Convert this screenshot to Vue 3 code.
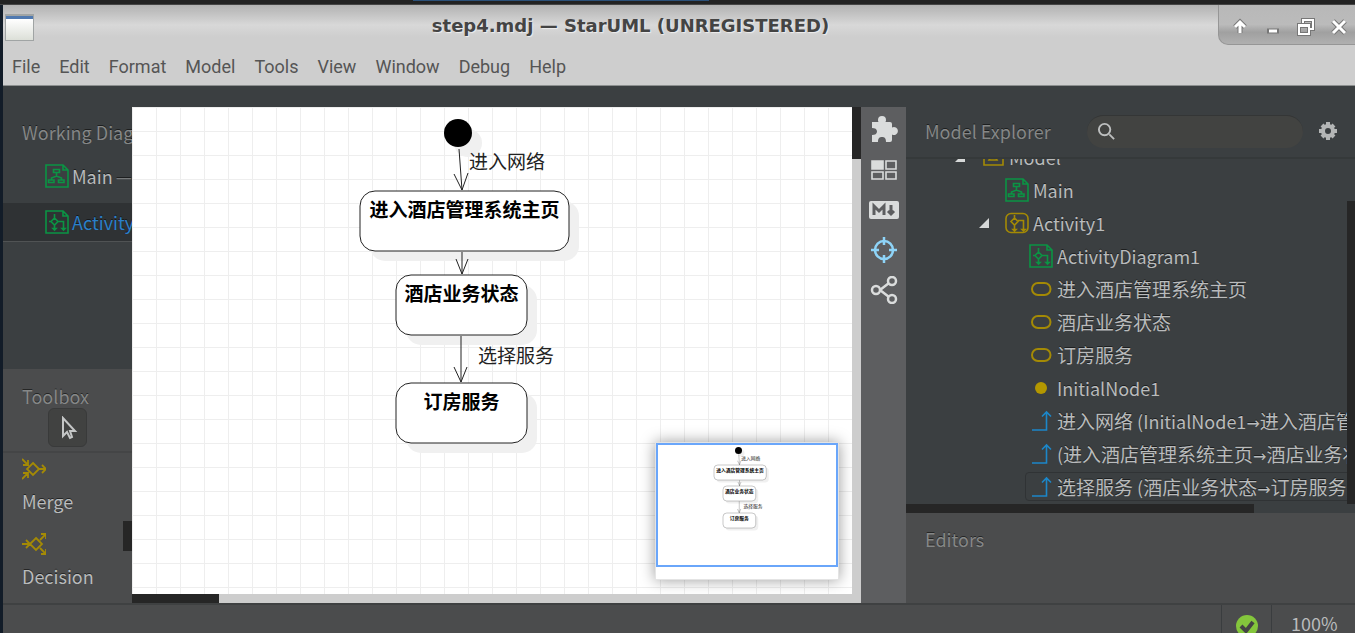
<script setup>
import { ref } from "vue";

const MENUS = [
  "File",
  "Edit",
  "Format",
  "Model",
  "Tools",
  "View",
  "Window",
  "Debug",
  "Help",
];

const WORKING_DIAGRAMS = [
  { name: "Main", suffix: "—", icon: "class-diagram" },
  { name: "ActivityDiagram1", icon: "activity-diagram" },
];

const TOOLS = [
  { name: "Merge", icon: "merge" },
  { name: "Decision", icon: "decision" },
];

const TREE = [
  { name: "Model", level: 0, icon: "model", open: true },
  { name: "Main", level: 1, icon: "class-diagram" },
  { name: "Activity1", level: 1, icon: "activity", open: true },
  { name: "ActivityDiagram1", level: 2, icon: "activity-diagram" },
  { name: "进入酒店管理系统主页", level: 2, icon: "action" },
  { name: "酒店业务状态", level: 2, icon: "action" },
  { name: "订房服务", level: 2, icon: "action" },
  { name: "InitialNode1", level: 2, icon: "initial" },
  {
    name: "进入网络 (InitialNode1→进入酒店管理系统主页)",
    level: 2,
    icon: "flow",
  },
  { name: "(进入酒店管理系统主页→酒店业务状态)", level: 2, icon: "flow" },
  { name: "选择服务 (酒店业务状态→订房服务)", level: 2, icon: "flow" },
];

const ACTIONS = [
  { name: "进入酒店管理系统主页", x: 228, y: 84, width: 209 },
  { name: "酒店业务状态", x: 264, y: 168, width: 131 },
  { name: "订房服务", x: 264, y: 276, width: 131 },
];

const FLOWS = [
  { line: "M327 42L330 83", head: "M322 67L330 83L336 66" },
  { line: "M330 145V167", head: "M324 152L330 167L336 152" },
  { line: "M329 229V275", head: "M322 260L329 275L335 260" },
];

const currentDiagram = ref("ActivityDiagram1");
const selected = ref(TREE.length - 1);
const search = ref("");

// Chinese runs and arrows have their own size next to the latin text
function splitRuns(name) {
  return name.match(/→|[\u4e00-\u9fff]+|[^→\u4e00-\u9fff]+/g).map((text) => {
    if (text === "→") return { text, type: "arrow" };
    return { text, type: /[\u4e00-\u9fff]/.test(text) ? "han" : "latin" };
  });
}
</script>

<template>
  <div class="desktop">
    <!-- Icons shared by the lists -->
    <svg class="sprite" aria-hidden="true">
      <symbol id="class-diagram" viewBox="0 0 24 24">
        <path d="M1 1H18L23 6V23H1Z M18 1V6H23" stroke-width="1.6" />
        <path
          d="M8.500 5.500h6v3h-6Z M11.500 8.500v3.500 M6.500 16V14L11.500 12L16.500 14V16 M3.500 16h5.500v2.500h-5.500Z M13.500 16h5.500v2.500h-5.500Z"
          stroke-width="1.6"
        />
      </symbol>
      <symbol id="activity-diagram" viewBox="0 0 24 24">
        <path d="M1 1H18L23 6V23H1Z M18 1V6H23" stroke-width="1.6" />
        <path
          d="M9.500 4V8L13 11.500L9.500 15L6 11.500L9.500 8 M6 11.500H4 M9.500 15V20 M13 11.500H18.500V20 M8 18.500L9.500 20L11 18.500Z M17 18.500L18.500 20L20 18.500Z"
          stroke-width="1.6"
        />
      </symbol>
      <symbol id="activity" viewBox="0 0 24 24">
        <rect
          x="1"
          y="2.500"
          width="22"
          height="19"
          rx="5"
          stroke-width="1.6"
        />
        <path
          d="M9.500 4V7L13 10.500L9.500 14L6 10.500L9.500 7 M9.500 14V20 M13 9.500H18.500V20 M8 18.500L9.500 20L11 18.500Z M17 18.500L18.500 20L20 18.500Z"
          stroke-width="1.6"
        />
      </symbol>
      <symbol id="model" viewBox="0 0 24 24">
        <path
          d="M3 6H22V20H3Z M3 6V3H11V6 M12 8L8 15H16Z"
          stroke-width="1.6"
        />
      </symbol>
      <symbol id="action" viewBox="0 0 24 24">
        <rect x="3" y="6" width="18.500" height="12" rx="6" />
      </symbol>
      <symbol id="initial" viewBox="0 0 24 24">
        <circle cx="12" cy="12" r="6" fill="currentColor" stroke="none" />
      </symbol>
      <symbol id="flow" viewBox="0 0 24 24">
        <path
          d="M3 21H17.500V3 M13 7.500L17.500 3L22 7.500"
          stroke-width="1.6"
        />
      </symbol>
      <symbol id="merge" viewBox="0 0 24 24">
        <path
          d="M11 6L17 12L11 18L5 12Z M17 12H24 M20 8L24 12L20 16 M0 2L6 8 M6 3V8H1 M0 22L6 16 M6 21V16H1"
          stroke-width="1.8"
        />
      </symbol>
      <symbol id="decision" viewBox="0 0 24 24">
        <path
          d="M14 6L20 12L14 18L8 12Z M0 12H8 M4 8L8 12L4 16 M18 8L24 2 M19 2H24V7 M18 16L24 22 M19 22H24V17"
          stroke-width="1.8"
        />
      </symbol>
    </svg>

    <div class="taskbar"><span class="taskbar-active" /></div>

    <div class="window">
      <header class="titlebar">
        <span class="app-icon" />
        <h1 class="title">step4.mdj — StarUML (UNREGISTERED)</h1>
        <div class="window-controls">
          <button aria-label="Shade">
            <svg viewBox="0 0 20 20">
              <path class="outline" d="M10 16V6M5 10L10 5L15 10" />
              <path d="M10 16V6M5 10L10 5L15 10" />
            </svg>
          </button>
          <button aria-label="Minimize">
            <svg viewBox="0 0 20 20">
              <path class="outline" d="M4 14H16" />
              <path d="M6 14H14" />
            </svg>
          </button>
          <button aria-label="Restore">
            <svg class="thin" viewBox="0 0 20 20">
              <path
                class="outline"
                d="M7 6V3H17V12H14M3 8H13V17H3ZM3 9H13"
              />
              <path d="M7 6V3H17V12H14M3 8H13V17H3ZM3 9H13" />
            </svg>
          </button>
          <button aria-label="Close">
            <svg viewBox="0 0 20 20">
              <path class="outline" d="M4 4L16 16M16 4L4 16" />
              <path d="M4 4L16 16M16 4L4 16" />
            </svg>
          </button>
        </div>
      </header>

      <nav class="menubar">
        <button v-for="menu in MENUS" :key="menu">{{ menu }}</button>
      </nav>

      <main class="workspace">
        <aside class="sidebar">
          <section class="working">
            <h2 class="panel-title">Working Diagrams</h2>
            <ul class="diagrams">
              <li v-for="diagram in WORKING_DIAGRAMS" :key="diagram.name">
                <button
                  :class="[
                    'diagram',
                    { 'diagram-current': diagram.name === currentDiagram },
                  ]"
                  @click="currentDiagram = diagram.name"
                >
                  <svg class="icon icon-green">
                    <use :href="`#${diagram.icon}`" />
                  </svg>
                  <span>{{ diagram.name }}</span>
                  <span v-if="diagram.suffix" class="suffix">{{
                    diagram.suffix
                  }}</span>
                </button>
              </li>
            </ul>
          </section>

          <section class="toolbox">
            <div class="toolbox-header">
              <h2 class="panel-title">Toolbox</h2>
              <button class="pointer" aria-label="Select">
                <svg viewBox="0 0 24 24">
                  <path d="M7 2V20L11 16L14 22L16 21L14 15H19Z" />
                </svg>
              </button>
            </div>
            <div class="toolbox-body">
              <button v-for="tool in TOOLS" :key="tool.name" class="tool">
                <svg class="icon icon-yellow">
                  <use :href="`#${tool.icon}`" />
                </svg>
                {{ tool.name }}
              </button>
              <span class="toolbox-thumb" />
            </div>
          </section>
        </aside>

        <section class="editor">
          <div class="canvas">
            <svg class="diagram-area">
              <g id="diagram">
                <g class="shadow">
                  <circle cx="336" cy="36" r="14" />
                  <rect
                    v-for="action in ACTIONS"
                    :key="action.name"
                    :x="action.x + 10"
                    :y="action.y + 10"
                    :width="action.width"
                    height="60"
                    rx="15"
                  />
                </g>
                <circle cx="326" cy="26" r="14" />
                <g v-for="action in ACTIONS" :key="action.name">
                  <rect
                    class="action"
                    :x="action.x"
                    :y="action.y"
                    :width="action.width"
                    height="60"
                    rx="15"
                  />
                  <text
                    class="action-name"
                    :x="action.x + action.width / 2"
                    :y="action.y + 26"
                  >
                    {{ action.name }}
                  </text>
                </g>
                <path
                  v-for="flow in FLOWS"
                  :key="flow.line"
                  class="flow"
                  :d="flow.line + flow.head"
                />
                <text class="flow-name" x="337" y="62">进入网络</text>
                <text class="flow-name" x="346" y="256">选择服务</text>
              </g>
            </svg>
            <div class="minimap">
              <svg viewBox="0 0 720 488"><use href="#diagram" /></svg>
            </div>
          </div>
          <div class="scroll-y"><span /></div>
          <div class="scroll-x"><span /></div>
        </section>

        <div class="toolbar">
          <button aria-label="Extensions">
            <svg viewBox="0 0 28 28">
              <path
                fill="currentColor"
                d="M2 6H8.500C8 5 8 4.500 8 4A4 4 0 0 1 16 4C16 4.500 16 5 15.500 6H20Q22 6 22 8V11.500A4 4 0 1 1 22 18.500V24Q22 26 20 26H16C16 22 14.500 21 12 21C9.500 21 8 22 8 26H2V19C5 19 7 18 7 15.500C7 13 5 12 2 12Z"
              />
            </svg>
          </button>
          <button aria-label="Views">
            <svg viewBox="0 0 28 28">
              <rect x="2" y="5" width="11" height="8" fill="currentColor" />
              <path
                class="stroked"
                d="M2 5H13V13H2Z M16 5H26V13H16Z M2 16H13V23H2Z M16 16H26V23H16Z"
              />
            </svg>
          </button>
          <button aria-label="Markdown">
            <svg viewBox="0 0 30 28">
              <rect
                x="0"
                y="5"
                width="30"
                height="18"
                rx="2"
                fill="currentColor"
              />
              <path class="mark" d="M5 19V10L10 15L15 10V19" />
              <path class="mark" d="M22 9V16M19 15L22 18L25 15" />
            </svg>
          </button>
          <button class="active" aria-label="Navigator">
            <svg viewBox="0 0 28 28">
              <g class="stroked thick">
                <circle cx="14" cy="14" r="9" />
                <path d="M14 1V9M14 19V27M1 14H9M19 14H27" />
              </g>
            </svg>
          </button>
          <button aria-label="Share">
            <svg viewBox="0 0 28 28">
              <g class="stroked thick">
                <circle cx="6" cy="14" r="4" />
                <circle cx="22" cy="5" r="4" />
                <circle cx="22" cy="23" r="4" />
                <path d="M10 14L19 7M10 14L19 21" />
              </g>
            </svg>
          </button>
        </div>

        <aside class="explorer">
          <header class="explorer-header">
            <h2 class="panel-title">Model Explorer</h2>
            <label class="search">
              <svg viewBox="0 0 20 20">
                <circle cx="8" cy="8" r="6" />
                <path d="M13 13L18 18" />
              </svg>
              <input v-model="search" type="text" aria-label="Search" />
            </label>
            <button class="settings" aria-label="Settings">
              <svg viewBox="0 0 20 20">
                <circle cx="10" cy="10" r="5" />
                <path
                  d="M10 1V4M10 16V19M1 10H4M16 10H19M4 4L6 6M14 14L16 16M16 4L14 6M6 14L4 16"
                />
              </svg>
            </button>
          </header>

          <div class="tree">
            <ul class="nodes">
              <li
                v-for="(node, index) in TREE"
                :key="index"
                :class="['node', `level-${node.level}`]"
              >
                <span class="toggle">
                  <svg v-if="node.open" viewBox="0 0 10 10">
                    <path d="M10 0V10H0Z" />
                  </svg>
                </span>
                <button
                  :class="['node-name', { selected: index === selected }]"
                  @click="selected = index"
                >
                  <svg :class="['icon', `icon-${node.icon}`]">
                    <use :href="`#${node.icon}`" />
                  </svg>
                  <span class="label"
                    ><span
                      v-for="(run, i) in splitRuns(node.name)"
                      :key="i"
                      :class="run.type"
                      >{{ run.text }}</span
                    ></span
                  >
                </button>
              </li>
            </ul>
            <span class="tree-thumb" />
          </div>
          <div class="tree-scroll"><span /></div>

          <section class="editors">
            <h2 class="panel-title">Editors</h2>
          </section>
        </aside>
      </main>

      <footer class="statusbar">
        <div class="status">
          <svg viewBox="0 0 22 22">
            <circle cx="11" cy="11" r="11" fill="#84c63c" />
            <path d="M5 11L10 16L17 7" />
          </svg>
        </div>
        <div class="zoom">100%</div>
      </footer>
    </div>
  </div>
</template>

<style>
body {
  margin: 0;
  background: #121c28;
}
</style>

<style scoped>
* {
  box-sizing: border-box;
}

.desktop {
  display: flex;
  flex-direction: column;
  height: 100vh;
  overflow: hidden;
  background: #121c28;
  color: #b9bbbc;
  font-family: "Noto Sans CJK SC", sans-serif;
  font-size: 18px;
  line-height: 24px;
}

button {
  background: none;
  border: none;
  padding: 0;
  margin: 0;
  font: inherit;
  color: inherit;
  text-align: left;
  text-shadow: inherit;
}

ul {
  list-style: none;
  margin: 0;
  padding: 0;
}

svg {
  display: block;
  flex: none;
}

.sprite {
  position: absolute;
  width: 0;
  height: 0;
}

.taskbar {
  display: flex;
  height: 5px;
  flex: none;
  padding-left: 413px;
  background: #222;
  border-bottom: 1px solid #444;
}

.taskbar-active {
  width: 296px;
  height: 1px;
  background: #2b5078;
}

.window {
  display: flex;
  flex: 1;
  flex-direction: column;
  min-height: 0;
  margin-left: 3px;
}

/* TITLE BAR */
.titlebar {
  display: flex;
  flex: none;
  height: 40px;
  padding-left: 2px;
  gap: 9px;
  background: linear-gradient(#b2b2b2, #d8d8d8 50%, #cecece 80%);
}

.app-icon {
  width: 29px;
  height: 27px;
  margin-top: 9px;
  border: 1px solid #a0a4a4;
  border-top-width: 2px;
  background: linear-gradient(#5079b0 3px, #fff 3px, #dcdfd8);
}

.title {
  flex: 1;
  margin: 0 -9px 0 0;
  color: #444;
  font-family: "DejaVu Sans", sans-serif;
  font-size: 18px;
  font-weight: bold;
  line-height: 42px;
  text-align: center;
  text-shadow: 1px 1px 1px #eee;
  white-space: nowrap;
}

.window-controls {
  display: flex;
  align-items: center;
  justify-content: flex-end;
  width: 137px;
  padding: 4px 4px 0 0;
  gap: 9px;
  border: solid #969696;
  border-width: 0 0 1px 1px;
  border-bottom-left-radius: 10px;
  background: linear-gradient(#b8b8b8, #bbb 50%, #a0a0a0 70%, #b0b0b0);
}

.window-controls button {
  padding: 0 2px;
}

.window-controls svg {
  width: 20px;
  height: 20px;
  fill: none;
  stroke: #fff;
  stroke-width: 3;
}

.window-controls .outline {
  stroke: #777;
  stroke-width: 5;
}

.window-controls .thin {
  stroke-width: 2;
}

.window-controls .thin .outline {
  stroke-width: 4;
}

/* MENU BAR */
.menubar {
  display: flex;
  flex: none;
  align-items: center;
  height: 41px;
  padding: 4px 9px 0;
  gap: 19px;
  border-bottom: 1px solid #8c8f8f;
  background: #cecece;
  color: #555;
  font-family: Roboto, sans-serif;
}

/* WORKSPACE */
.workspace {
  display: flex;
  flex: 1;
  min-height: 0;
  background: #3b3f41;
  text-shadow: 0 -1px 0 rgba(0, 0, 0, 0.5);
}

.panel-title {
  margin: 0;
  color: #858787;
  font-size: 18px;
  font-weight: normal;
  line-height: 24px;
  white-space: nowrap;
}

.icon {
  width: 24px;
  height: 24px;
  fill: none;
  stroke: currentColor;
  stroke-width: 2;
}

.icon-green,
.icon-class-diagram,
.icon-activity-diagram {
  color: #0b9444;
}

.icon-yellow,
.icon-model,
.icon-activity,
.icon-action {
  color: #a48a05;
}

.icon-initial {
  color: #b39700;
}

.icon-flow {
  color: #1c87c9;
}

.sidebar {
  display: flex;
  flex-direction: column;
  width: 129px;
  flex: none;
  overflow: hidden;
}

.working {
  flex: 1;
  padding-top: 34px;
}

.working .panel-title,
.toolbox .panel-title {
  padding-left: 19px;
}

.diagrams {
  display: flex;
  flex-direction: column;
  gap: 8px;
  padding-top: 13px;
}

.diagram {
  display: flex;
  align-items: center;
  width: 100%;
  height: 38px;
  padding-left: 42px;
  gap: 3px;
  white-space: nowrap;
}

.diagram-current {
  background: #2f3234;
  box-shadow: 0 1px 0 #505354;
  color: #2a80cb;
}

.suffix {
  color: #777a7b;
}

.toolbox {
  flex: none;
  height: 234px;
  background: #4b4c4d;
}

.toolbox-header {
  height: 84px;
  padding-top: 15px;
  border-bottom: 2px solid #444546;
}

.pointer {
  display: flex;
  align-items: center;
  justify-content: center;
  width: 39px;
  height: 39px;
  margin-left: 45px;
  border: 1px solid #393a3a;
  border-radius: 6px;
  background: #414241;
}

.pointer svg {
  width: 24px;
  height: 24px;
  fill: none;
  stroke: #c4c6c6;
  stroke-width: 2;
}

.toolbox-body {
  position: relative;
  display: flex;
  flex-direction: column;
  height: 150px;
  padding: 4px 0 0 19px;
  gap: 19px;
}

.tool {
  display: flex;
  flex-direction: column;
  gap: 8px;
}

.toolbox-thumb {
  position: absolute;
  right: 0;
  top: 68px;
  width: 9px;
  height: 30px;
  background: #262626;
}

/* EDITOR */
.editor {
  display: grid;
  grid-template: 1fr 9px / 1fr 9px;
  flex: 1;
  min-width: 0;
  margin-top: 21px;
  background: #cdcdcd;
  text-shadow: none;
}

.canvas {
  position: relative;
  overflow: hidden;
  background:
    linear-gradient(#eee 1px, transparent 1px) 0 0 / 24px 24px,
    linear-gradient(90deg, #eee 1px, transparent 1px) 0 0 / 24px 24px,
    #fff;
}

.diagram-area {
  width: 100%;
  height: 100%;
}

.shadow {
  fill: #f0f0f0;
}

.action {
  fill: #fff;
  stroke: #222;
}

.flow {
  fill: none;
  stroke: #222;
}

.action-name {
  font-size: 19px;
  font-weight: bold;
  text-anchor: middle;
}

.flow-name {
  fill: #222;
  font-size: 19px;
}

.minimap {
  position: absolute;
  right: 13px;
  bottom: 14px;
  width: 184px;
  padding: 1px 1px 13px;
  border: 1px solid #e4e4e4;
  background: #fff;
  box-shadow: 0 0 14px rgba(0, 0, 0, 0.4);
}

.minimap svg {
  width: 100%;
  outline: 2px solid #6aa6fa;
  outline-offset: -1px;
}

.scroll-y span,
.scroll-x span {
  display: block;
  background: #262626;
}

.scroll-y span {
  height: 52px;
}

.scroll-x {
  grid-column: 1 / -1;
}

.scroll-x span {
  width: 87px;
  height: 9px;
}

/* TOOLBAR */
.toolbar {
  display: flex;
  flex-direction: column;
  align-items: center;
  width: 45px;
  flex: none;
  margin-top: 21px;
  padding-top: 3px;
  background: #5d5e60;
  color: #dadcdc;
}

.toolbar button {
  display: flex;
  align-items: center;
  justify-content: center;
  width: 45px;
  height: 40px;
}

.toolbar svg {
  width: 30px;
  height: 28px;
}

.toolbar .active {
  color: #8ed4f8;
}

.stroked {
  fill: none;
  stroke: currentColor;
  stroke-width: 1.6;
}

.thick {
  stroke-width: 2.5;
}

.mark {
  fill: none;
  stroke: #5d5e60;
  stroke-width: 3;
}

/* EXPLORER */
.explorer {
  display: flex;
  flex-direction: column;
  flex: 0 1 449px;
  min-width: 0;
}

.explorer-header {
  display: flex;
  flex: none;
  align-items: center;
  height: 73px;
  padding: 19px 17px 0 19px;
  border-bottom: 2px solid #35393a;
}

.search {
  display: flex;
  align-items: center;
  flex: 1;
  min-width: 0;
  height: 33px;
  margin: 0 15px 0 36px;
  padding: 0 10px;
  border-radius: 17px;
  border-top: 1px solid #343636;
  background: #424341;
}

.search svg {
  width: 19px;
  height: 19px;
  fill: none;
  stroke: #bdbfbf;
  stroke-width: 2;
}

.search input {
  flex: 1;
  width: 100%;
  min-width: 0;
  border: none;
  outline: none;
  background: none;
  color: inherit;
  font: inherit;
}

.settings svg {
  width: 20px;
  height: 20px;
  fill: none;
  stroke: #b4b6b6;
  stroke-width: 4;
}

.tree {
  position: relative;
  flex: 1;
  min-height: 0;
  overflow: hidden;
}

.nodes {
  margin-top: -19px;
}

.node {
  display: flex;
  align-items: center;
  height: 33px;
  white-space: nowrap;
}

.level-0 {
  padding-left: 47px;
}

.level-1 {
  padding-left: 71px;
}

.level-2 {
  padding-left: 95px;
}

.toggle {
  width: 24px;
  flex: none;
  padding-left: 2px;
}

.toggle svg {
  width: 10px;
  height: 10px;
  fill: #d6d8d8;
}

.node-name {
  display: flex;
  align-items: center;
  height: 29px;
  padding: 0 3px;
  gap: 4px;
  border: 1px solid transparent;
  border-radius: 4px;
}

.node-name.selected {
  border-color: #303335;
}

.label {
  white-space: pre;
}

.han {
  font-size: 19px;
}

.arrow {
  font-family: "DejaVu Sans", sans-serif;
  font-size: 16px;
  line-height: 16px;
}

.tree-thumb {
  position: absolute;
  right: 0;
  bottom: 0;
  width: 8px;
  height: 303px;
  background: #262626;
}

.tree-scroll {
  flex: none;
}

.tree-scroll span {
  display: block;
  width: 348px;
  height: 9px;
  background: #262626;
}

.editors {
  flex: none;
  height: 90px;
  padding: 14px 19px;
  background: #4b4c4d;
}

/* STATUS BAR */
.statusbar {
  display: flex;
  flex: none;
  justify-content: flex-end;
  height: 30px;
  overflow: hidden;
  border-top: 2px solid #3f4142;
  background: #4b4c4d;
}

.status,
.zoom {
  border-left: 1px solid #3a3d3f;
}

.status {
  width: 50px;
  padding: 10px 14px 0;
}

.status svg {
  width: 22px;
  height: 22px;
}

.status path {
  fill: none;
  stroke: #444;
  stroke-width: 4;
}

.zoom {
  width: 84px;
  padding: 6px 0 0 19px;
}
</style>
